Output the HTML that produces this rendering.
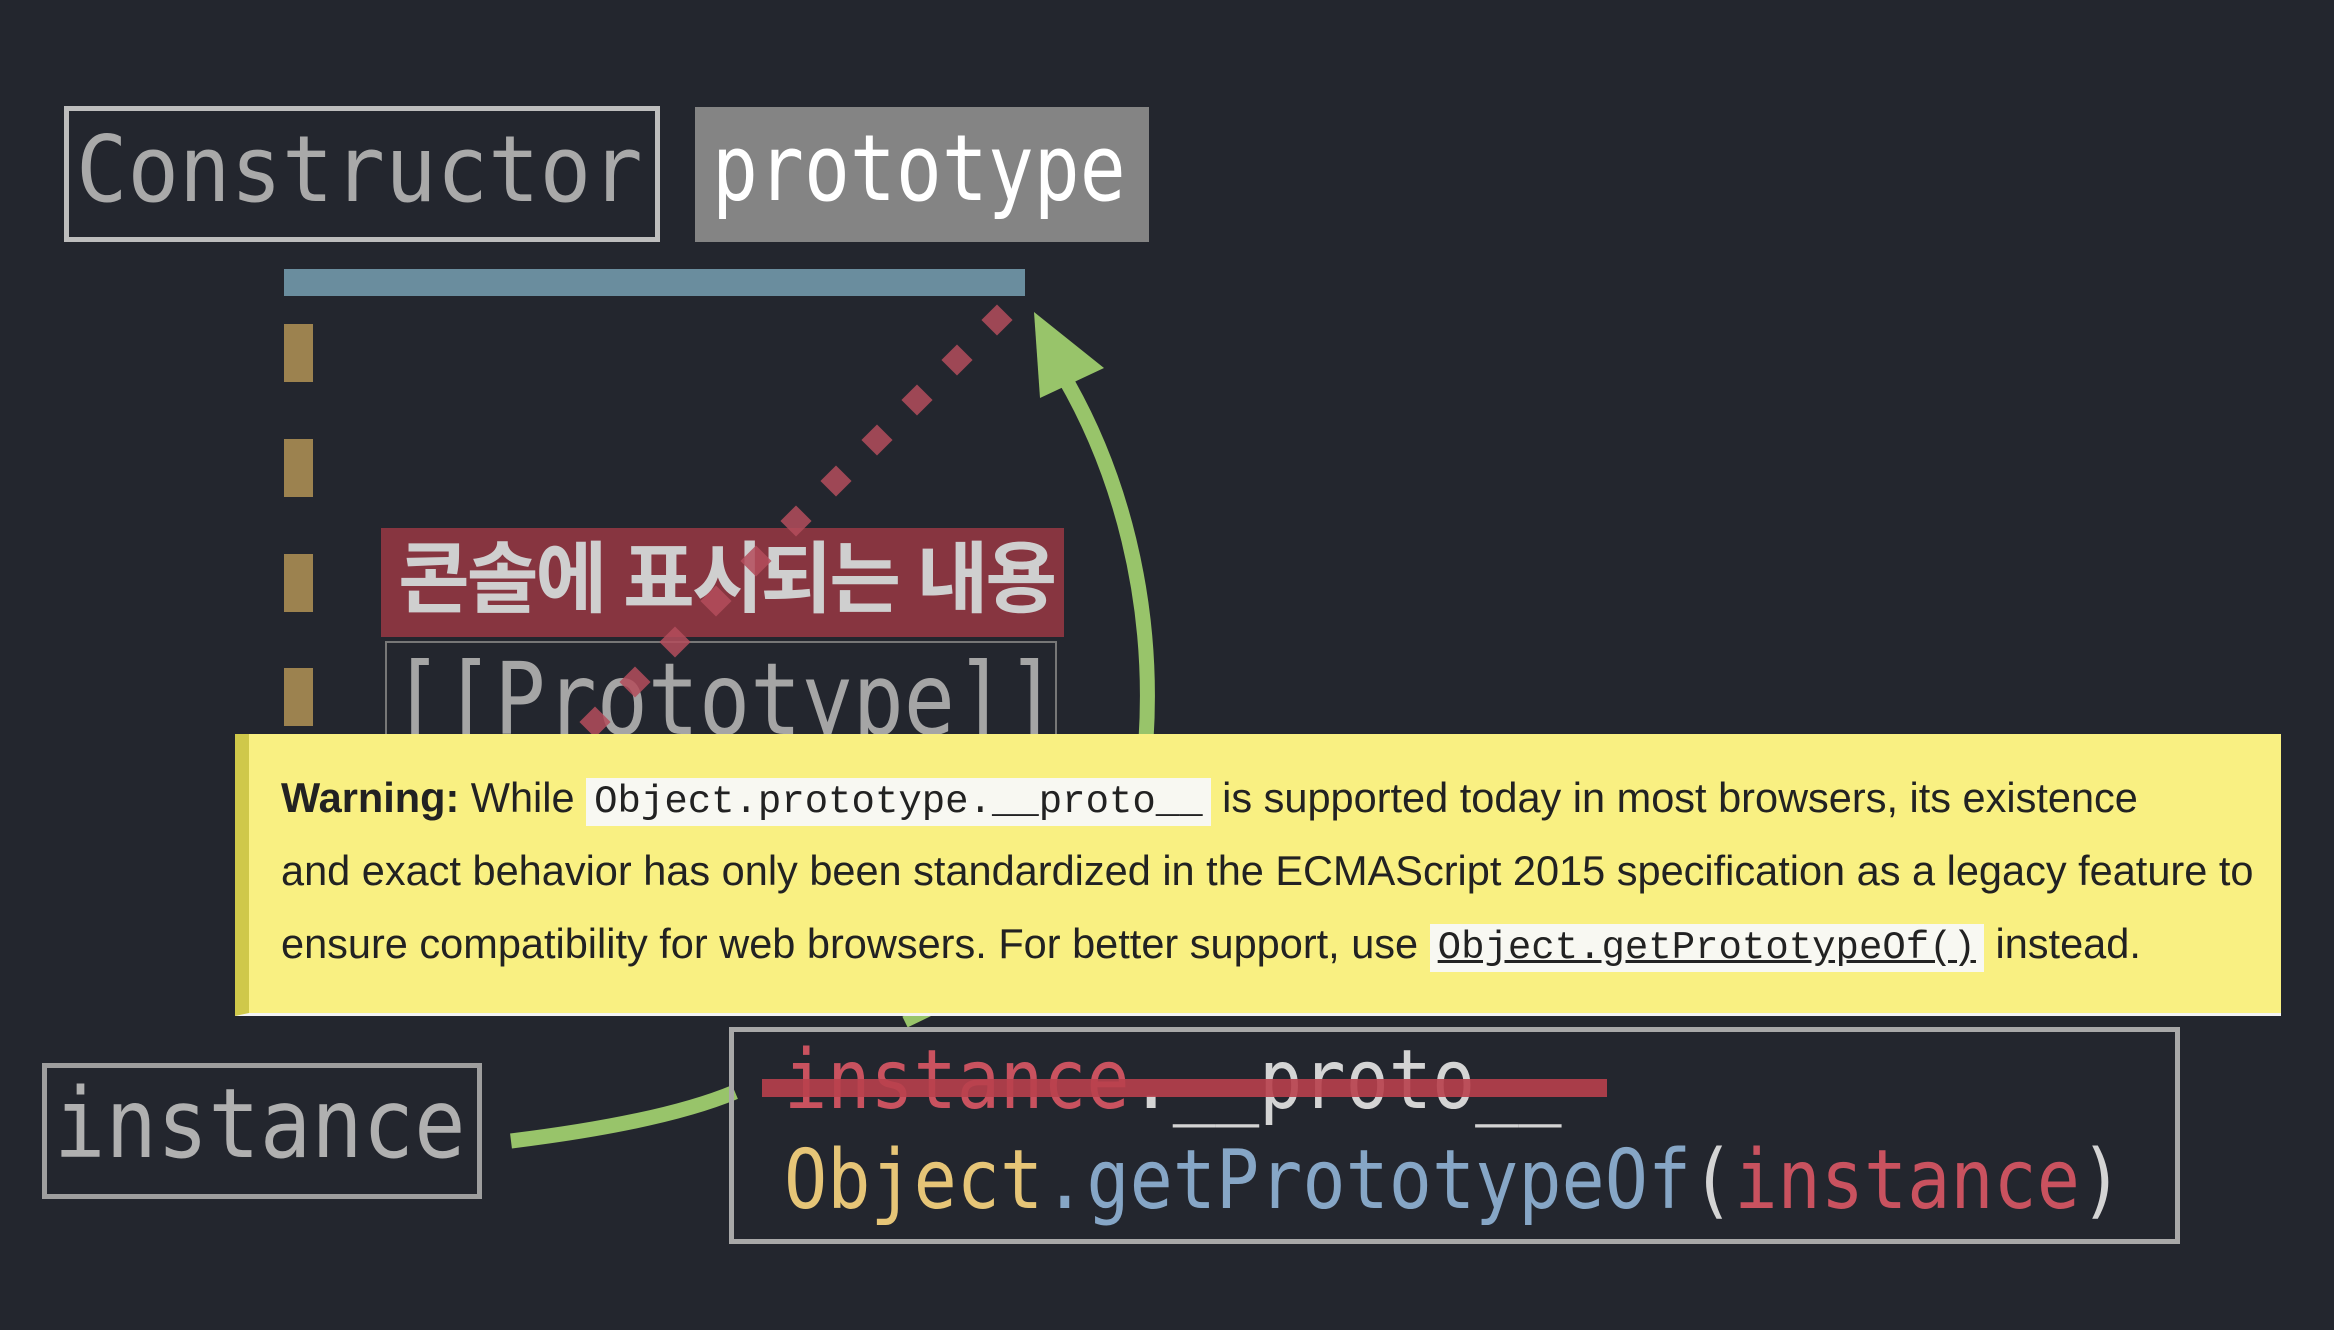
<!DOCTYPE html>
<html><head><meta charset="utf-8"><style>
*{margin:0;padding:0;box-sizing:border-box}
body{width:2334px;height:1330px;background:#23262e;position:relative;overflow:hidden;font-family:"Liberation Sans",sans-serif}
.abs{position:absolute}
.mono{font-family:"DejaVu Sans Mono","Liberation Mono",monospace}
.lbl{white-space:nowrap;transform-origin:0 50%;line-height:1}
.ln{position:absolute;left:281px;font-size:41.5px;color:#222;white-space:nowrap;line-height:50px;height:50px}
.cd{background:#f8f8f2;font-family:'Liberation Mono',monospace;font-size:39px;padding:2px 8px;line-height:1}
</style></head><body>

<div class="abs" style="left:64px;top:106px;width:596px;height:136px;border:5px solid #bdbdbd"></div>
<div class="abs mono lbl" style="left:76px;top:124px;font-size:92px;color:#a9a9a9;transform:scaleX(0.93)">Constructor</div>
<div class="abs" style="left:695px;top:107px;width:454px;height:135px;background:#848484"></div>
<div class="abs mono lbl" style="left:712px;top:123px;font-size:92px;color:#fff;transform:scaleX(0.83)">prototype</div>

<div class="abs" style="left:284px;top:269px;width:741px;height:27px;background:#6a8d9e"></div>
<div class="abs" style="left:284px;top:324px;width:29px;height:58px;background:#9c824f"></div>
<div class="abs" style="left:284px;top:439px;width:29px;height:58px;background:#9c824f"></div>
<div class="abs" style="left:284px;top:554px;width:29px;height:58px;background:#9c824f"></div>
<div class="abs" style="left:284px;top:668px;width:29px;height:58px;background:#9c824f"></div>

<div class="abs" style="left:381px;top:528px;width:683px;height:109px;background:#873540"></div>
<div class="abs lbl" style="left:398px;top:540px;font-size:78px;font-weight:bold;color:#cfcfcf;font-family:'Liberation Sans','Noto Sans CJK KR',sans-serif;letter-spacing:-3px">콘솔에 표시되는 내용</div>
<div class="abs" style="left:385px;top:641px;width:672px;height:120px;border:2px solid #777"></div>
<div class="abs mono lbl" style="left:392px;top:650px;font-size:100px;color:#a5a5a5;transform:scaleX(0.85)">[[Prototype]]</div>

<svg class="abs" style="left:0;top:0" width="2334" height="1330">
  <g fill="#b44d5c" opacity="0.85">
    <rect x="-11" y="-11" width="22" height="22" transform="translate(997,320) rotate(45)"/>
    <rect x="-11" y="-11" width="22" height="22" transform="translate(957,360) rotate(45)"/>
    <rect x="-11" y="-11" width="22" height="22" transform="translate(917,400) rotate(45)"/>
    <rect x="-11" y="-11" width="22" height="22" transform="translate(877,440) rotate(45)"/>
    <rect x="-11" y="-11" width="22" height="22" transform="translate(836,481) rotate(45)"/>
    <rect x="-11" y="-11" width="22" height="22" transform="translate(796,521) rotate(45)"/>
    <rect x="-11" y="-11" width="22" height="22" transform="translate(756,561) rotate(45)"/>
    <rect x="-11" y="-11" width="22" height="22" transform="translate(716,601) rotate(45)"/>
    <rect x="-11" y="-11" width="22" height="22" transform="translate(675,642) rotate(45)"/>
    <rect x="-11" y="-11" width="22" height="22" transform="translate(635,682) rotate(45)"/>
    <rect x="-11" y="-11" width="22" height="22" transform="translate(595,722) rotate(45)"/>
  </g>
  <path d="M1146 740 C1155 600 1120 470 1060 370" fill="none" stroke="#98c46a" stroke-width="15"/>
  <polygon points="1034,312 1104,368 1040,398" fill="#98c46a"/>
  <path d="M511 1141 C600 1130 680 1115 735 1092" fill="none" stroke="#98c46a" stroke-width="15"/>
  <path d="M905 1022 L940 1005" stroke="#98c46a" stroke-width="12"/>
</svg>

<div class="abs" style="left:235px;top:734px;width:2046px;height:282px;background:#f9f082;border-left:14px solid #cfc84a;border-bottom:3px solid #f4f4f4"></div>
<div class="ln" style="top:773px"><b>Warning:</b> While <span class="cd">Object.prototype.__proto__</span> is supported today in most browsers, its existence</div>
<div class="ln" style="top:846px">and exact behavior has only been standardized in the ECMAScript 2015 specification as a legacy feature to</div>
<div class="ln" style="top:919px">ensure compatibility for web browsers. For better support, use <span class="cd" style="text-decoration:underline">Object.getPrototypeOf()</span> instead.</div>

<div class="abs" style="left:42px;top:1063px;width:440px;height:136px;border:5px solid #9e9e9e"></div>
<div class="abs mono lbl" style="left:54px;top:1076px;font-size:96px;color:#b0b0b0;transform:scaleX(0.89)">instance</div>

<div class="abs" style="left:729px;top:1027px;width:1451px;height:217px;border:5px solid #a8a8a8"></div>
<div class="abs mono lbl" style="left:784px;top:1040px;font-size:82px;transform:scaleX(0.875)"><span style="color:#c9525f">instance</span><span style="color:#d4d4d4">.__proto__</span></div>
<div class="abs" style="left:762px;top:1079px;width:845px;height:18px;background:#b8404c;opacity:0.9"></div>
<div class="abs mono lbl" style="left:784px;top:1140px;font-size:82px;transform:scaleX(0.875)"><span style="color:#e6c577">Object</span><span style="color:#86a6c6">.getPrototypeOf</span><span style="color:#d4d4d4">(</span><span style="color:#c9525f">instance</span><span style="color:#d4d4d4">)</span></div>

</body></html>
